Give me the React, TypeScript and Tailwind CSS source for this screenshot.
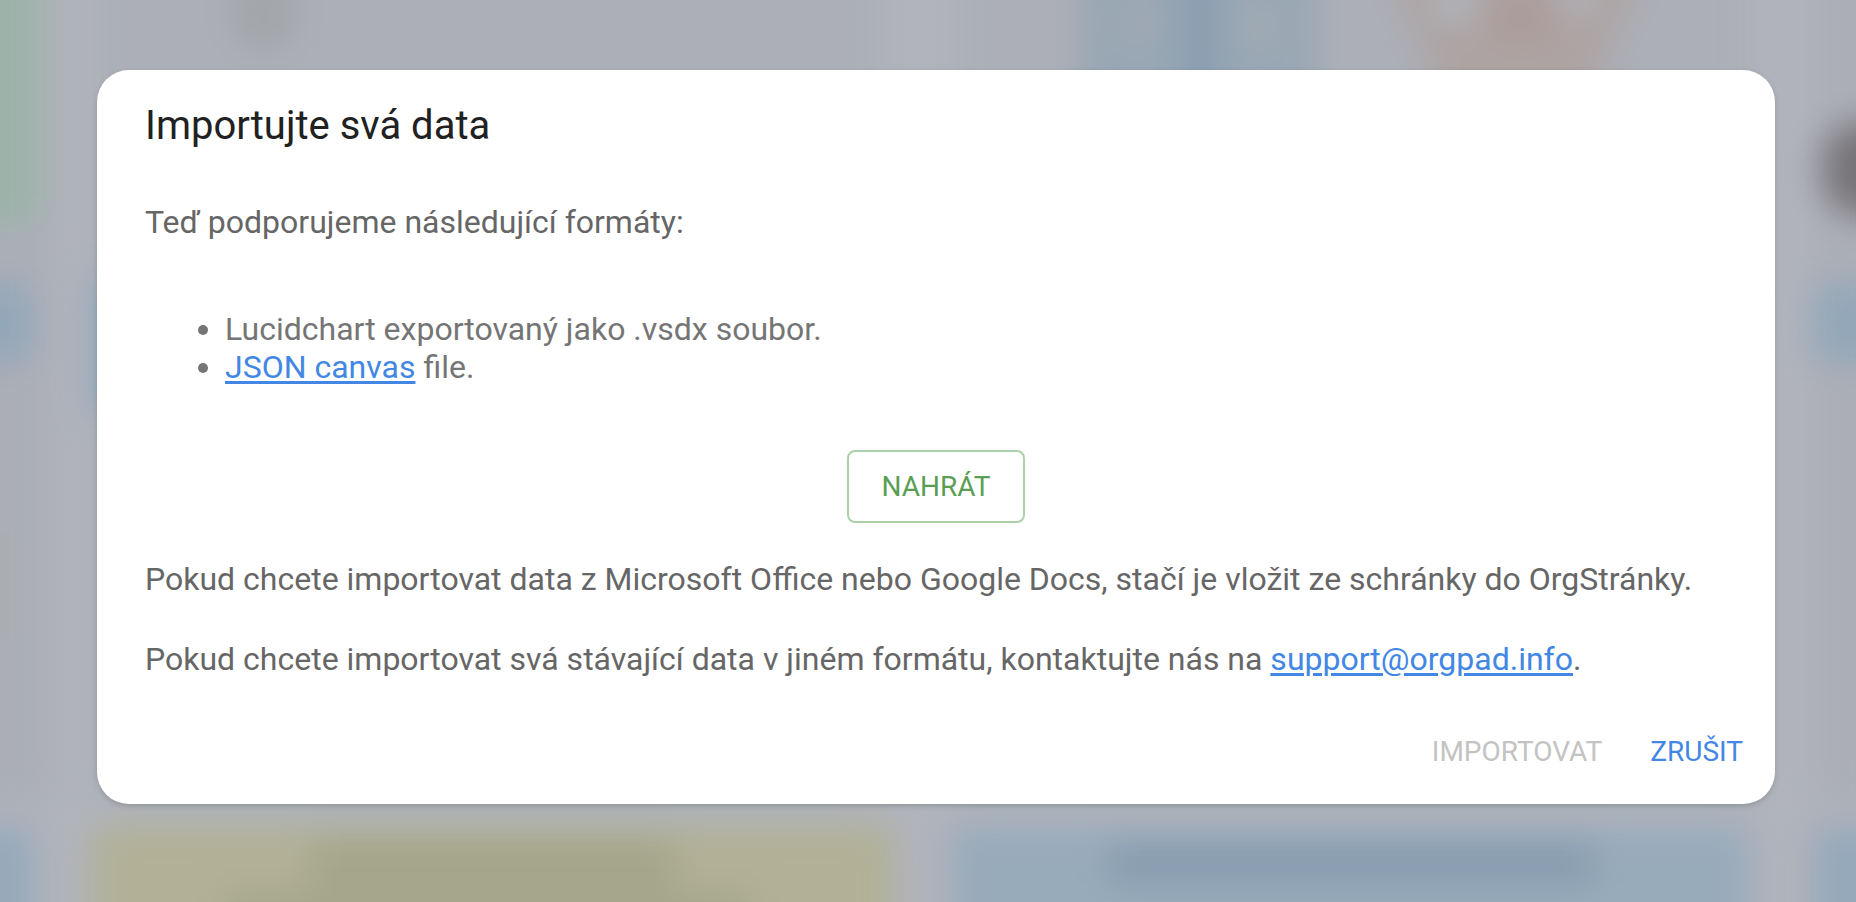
import { useRef } from "react";

const link = "text-[#4287e3] underline decoration-[3px] underline-offset-[3px]";
const action = "rounded-lg px-4 py-3 text-[28px] leading-[49px] uppercase";

// Blurred canvas that stays visible behind the dialog
const Backdrop: React.FC = () => (
  <svg
    className="absolute inset-0 size-full"
    viewBox="0 0 1856 902"
    preserveAspectRatio="xMidYMid slice"
    aria-hidden="true"
  >
    <defs>
      <filter id="soft" x="-20%" y="-20%" width="140%" height="140%" colorInterpolationFilters="sRGB">
        <feGaussianBlur stdDeviation="17" />
      </filter>
    </defs>
    <rect width="1856" height="902" fill="#b1b4bc" />
    <g filter="url(#soft)">
      <rect x="-60" y="-60" width="110" height="860" fill="#abaeb6" />
      <rect x="96" y="-60" width="784" height="860" fill="#acafb7" />
      <rect x="960" y="-60" width="790" height="860" fill="#acafb7" />
      <rect x="1816" y="-60" width="120" height="860" fill="#abaeb6" />

      <rect x="-60" y="-60" width="102" height="284" rx="10" fill="#9cb3a9" />
      <rect x="-60" y="284" width="92" height="78" rx="10" fill="#92a7ba" />
      <rect x="90" y="276" width="200" height="140" rx="10" fill="#93a9bb" />
      <rect x="-60" y="828" width="92" height="160" rx="10" fill="#94a9bb" />
      <rect x="-60" y="530" width="62" height="110" fill="#a9aeab" />

      <ellipse cx="264" cy="14" rx="34" ry="36" fill="#a1a5a8" />
      <rect x="1080" y="-60" width="236" height="190" fill="#98a7b4" />
      <rect x="1184" y="-60" width="32" height="190" fill="#879cb1" />
      <ellipse cx="1138" cy="22" rx="18" ry="30" fill="#a1a9b3" />
      <ellipse cx="1260" cy="26" rx="18" ry="30" fill="#a2aab2" />
      <path d="M1384 -40 L1452 120 H1578 L1648 -40 Z" fill="#ada3a2" />
      <ellipse cx="1455" cy="0" rx="20" ry="28" fill="#b0b6be" />
      <ellipse cx="1578" cy="-4" rx="18" ry="24" fill="#b0b3ba" />
      <ellipse cx="1522" cy="18" rx="34" ry="16" fill="#aa9894" />

      <rect x="1822" y="122" width="110" height="94" rx="40" fill="#767277" />
      <rect x="1812" y="284" width="110" height="78" rx="10" fill="#92a7b9" />
      <rect x="1814" y="828" width="110" height="160" rx="10" fill="#94a8ba" />

      <rect x="92" y="826" width="802" height="160" rx="10" fill="#b2b196" />
      <rect x="310" y="842" width="366" height="46" fill="#a3a488" />
      <rect x="226" y="894" width="524" height="50" fill="#a4a588" />
      <rect x="950" y="826" width="800" height="160" rx="10" fill="#98abbb" />
      <rect x="1108" y="844" width="486" height="40" fill="#869bae" />
    </g>
  </svg>
);

const ImportDialog: React.FC = () => {
  const fileInput = useRef<HTMLInputElement>(null);

  return (
    <section
      role="dialog"
      aria-labelledby="import-title"
      className="relative w-full rounded-[32px] bg-white shadow-[0_2px_5px_rgba(60,70,75,0.25)]"
    >
      <h2 id="import-title" className="px-12 pt-6 text-[40px] leading-[64px] text-[#212121]">
        Importujte svá data
      </h2>
      <div className="px-12 pt-10 text-[32px] leading-[48px] text-[#666666]">
        <p>Teď podporujeme následující formáty:</p>
        <ul className="my-16 list-disc pl-20 leading-[38px] text-[#757575]">
          <li>Lucidchart exportovaný jako .vsdx soubor.</li>
          <li>
            <a href="#json-canvas" className={link}>
              JSON canvas
            </a>{" "}
            file.
          </li>
        </ul>
        <div className="flex justify-center">
          <input ref={fileInput} type="file" aria-label="Nahrát" className="hidden" />
          <button
            type="button"
            onClick={() => fileInput.current?.click()}
            className="min-w-[178px] rounded-lg border-2 border-[#acd0a9] px-7 py-[10px] text-[28px] leading-[49px] uppercase text-[#5a9e54]"
          >
            Nahrát
          </button>
        </div>
        <p className="mt-8">
          Pokud chcete importovat data z Microsoft Office nebo Google Docs, stačí je vložit ze
          schránky do OrgStránky.
        </p>
        <p className="mt-8">
          Pokud chcete importovat svá stávající data v jiném formátu, kontaktujte nás na{" "}
          <a href="mailto:support@orgpad.info" className={link}>
            support@orgpad.info
          </a>
          .
        </p>
      </div>
      <div className="flex justify-end gap-4 px-4 pt-8 pb-4">
        <button type="button" disabled className={`${action} text-[#c3c3c3]`}>
          Importovat
        </button>
        <button type="button" className={`${action} text-[#4287e3]`}>
          Zrušit
        </button>
      </div>
    </section>
  );
};

export default function App() {
  return (
    <main className="relative min-h-screen overflow-hidden bg-[#b1b4bc] pt-[70px] pr-[81px] pb-12 pl-[97px] font-[Roboto,sans-serif]">
      <Backdrop />
      <ImportDialog />
    </main>
  );
}
